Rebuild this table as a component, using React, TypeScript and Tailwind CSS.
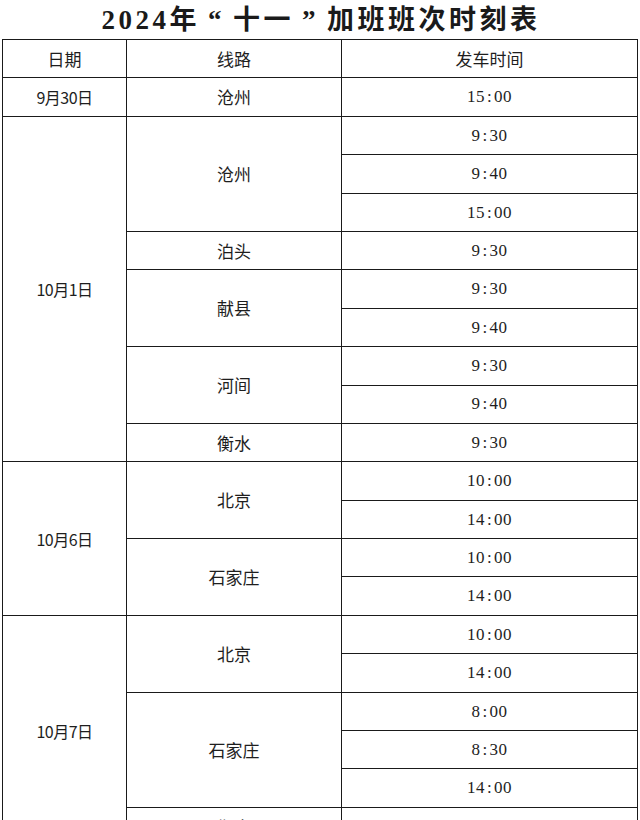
type Route = { name: string; times: string[] };
type Day = { date: string; routes: Route[] };

const days: Day[] = [
  { date: "9月30日", routes: [{ name: "沧州", times: ["15:00"] }] },
  {
    date: "10月1日",
    routes: [
      { name: "沧州", times: ["9:30", "9:40", "15:00"] },
      { name: "泊头", times: ["9:30"] },
      { name: "献县", times: ["9:30", "9:40"] },
      { name: "河间", times: ["9:30", "9:40"] },
      { name: "衡水", times: ["9:30"] },
    ],
  },
  {
    date: "10月6日",
    routes: [
      { name: "北京", times: ["10:00", "14:00"] },
      { name: "石家庄", times: ["10:00", "14:00"] },
    ],
  },
  {
    date: "10月7日",
    routes: [
      { name: "北京", times: ["10:00", "14:00"] },
      { name: "石家庄", times: ["8:00", "8:30", "14:00"] },
      { name: "衡水", times: ["9:30"] },
    ],
  },
];

const cjk = "font-['Noto_Sans_CJK_SC',sans-serif]";
const cell = "flex items-center justify-center border-r border-b border-[#1a1a1a] text-[#1e1e1e]";

function Time({ value }: { value: string }) {
  const [h, m] = value.split(":");
  return (
    <span className="font-['Liberation_Serif',serif] text-[17px] tracking-[0.5px]">
      {h}
      <span className="px-[2px]">:</span>
      {m}
    </span>
  );
}

export default function App() {
  const rows: React.ReactNode[] = [];
  let r = 2;

  days.forEach((day, di) => {
    const dayRows = day.routes.reduce((n, rt) => n + rt.times.length, 0);
    rows.push(
      <div
        key={`d${di}`}
        className={`${cell} ${cjk} text-[16px] tracking-[-0.5px]`}
        style={{ gridColumn: 1, gridRow: `${r} / span ${dayRows}` }}
      >
        {day.date}
      </div>
    );
    let rr = r;
    day.routes.forEach((rt, ri) => {
      rows.push(
        <div
          key={`r${di}-${ri}`}
          className={`${cell} ${cjk} text-[17px]`}
          style={{ gridColumn: 2, gridRow: `${rr} / span ${rt.times.length}` }}
        >
          {rt.name}
        </div>
      );
      rt.times.forEach((t, ti) => {
        rows.push(
          <div
            key={`t${di}-${ri}-${ti}`}
            className={cell}
            style={{ gridColumn: 3, gridRow: rr + ti }}
          >
            <Time value={t} />
          </div>
        );
      });
      rr += rt.times.length;
    });
    r += dayRows;
  });

  return (
    <div className="w-[640px] min-h-[820px] bg-white">
      <h1
        className={`h-[39px] flex items-center justify-center pl-[2px] pt-[1px] text-[27px] font-bold tracking-[3.5px] text-[#1a1a1a] font-['Liberation_Serif','Noto_Sans_CJK_SC',serif] leading-none`}
      >
        2024年<span className="mx-[8px]">“</span>十一<span className="mx-[8px]">”</span>加班班次时刻表
      </h1>
      <div className="mx-[2px] grid grid-cols-[124px_215px_1fr] auto-rows-[38.4px] border-l border-t border-[#1a1a1a]">
        <div className={`${cell} ${cjk} text-[17px]`}>日期</div>
        <div className={`${cell} ${cjk} text-[17px]`}>线路</div>
        <div className={`${cell} ${cjk} text-[17px]`}>发车时间</div>
        {rows}
      </div>
    </div>
  );
}
